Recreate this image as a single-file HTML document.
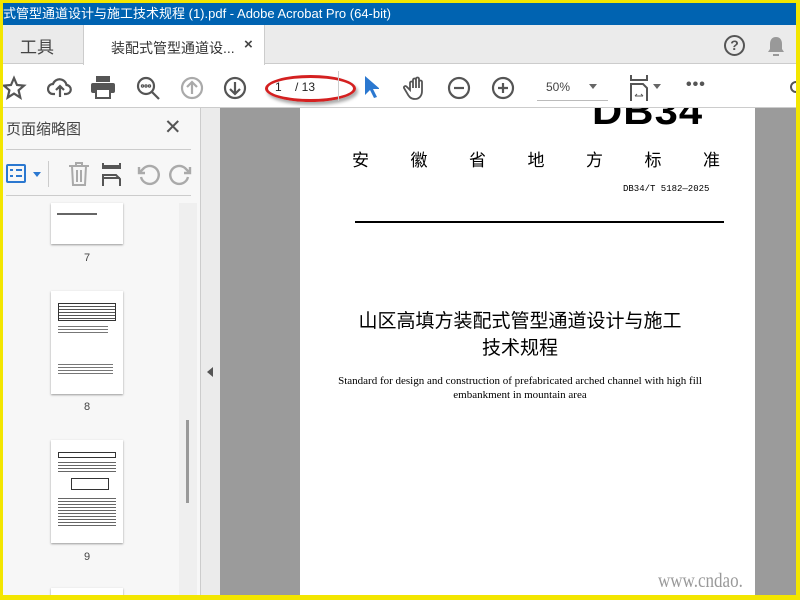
<!DOCTYPE html><html><head><meta charset="utf-8"><style>
*{margin:0;padding:0;box-sizing:border-box}
body{width:800px;height:600px;overflow:hidden;background:#f3e600;position:relative;font-family:"Liberation Sans","Noto Sans CJK SC",sans-serif}
.a{position:absolute}
.ic{position:absolute;top:72px;width:26px;height:26px}
.ic svg{width:26px;height:26px;fill:none;stroke:#555;stroke-width:2.2}
</style></head><body>
<div class="a" style="left:3px;top:3px;width:793px;height:592px;background:#fff;overflow:hidden">
 <div class="a" style="left:0;top:0;width:793px;height:22px;background:#0063b1;color:#fff;font-size:13px;line-height:21px;white-space:nowrap">式管型通道设计与施工技术规程 (1).pdf - Adobe Acrobat Pro (64-bit)</div>
 <div class="a" style="left:14px;top:20px;font-size:14px;color:#999;font-family:'Noto Serif CJK SC',serif;letter-spacing:2px">道标网</div>
 <div class="a" style="left:0;top:22px;width:793px;height:39px;background:#ebebeb;border-bottom:1px solid #ccc"></div>
 <div class="a" style="left:17px;top:30px;font-size:17px;color:#444">工具</div>
 <div class="a" style="left:80px;top:22px;width:182px;height:40px;background:#fff;border-left:1px solid #ccc;border-right:1px solid #ccc"></div>
 <div class="a" style="left:108px;top:35px;font-size:14px;color:#333">装配式管型通道设...</div>
 <div class="a" style="left:241px;top:33px;font-size:15px;color:#444;font-weight:bold">×</div>
 <div class="a" style="left:721px;top:32px;width:21px;height:21px;border:2px solid #555;border-radius:50%;font-size:14px;font-weight:bold;text-align:center;line-height:17px;color:#555">?</div>
 <svg class="a" style="left:763px;top:32px" width="20" height="22"><path d="M10 2c-4 0-6 3-6 7v5l-2 3h16l-2-3V9c0-4-2-7-6-7z M7 19h6v2H7z" fill="#999"/></svg>
 <div class="ic" style="left:-2px"><svg><path d="M13 3l3 7 7 .6-5.4 4.7 1.7 7.3-6.3-4-6.3 4 1.7-7.3L3 10.6l7-.6z"/></svg></div>
 <div class="ic" style="left:44px"><svg><path d="M8 19H6a5 5 0 010-10 7 7 0 0113.5 1A4.5 4.5 0 0119 19h-2M13 22V12M9 15l4-4 4 4"/></svg></div>
 <svg class="a" style="left:87px;top:72px" width="26" height="24"><rect x="6" y="1" width="14" height="6" fill="#555"/><rect x="1" y="8" width="24" height="10" rx="2" fill="#555"/><rect x="6" y="14" width="14" height="9" fill="#fff" stroke="#555" stroke-width="2"/></svg>
 <div class="ic" style="left:132px"><svg><circle cx="11" cy="11" r="8"/><path d="M17 17l7 7"/><circle cx="7.5" cy="11" r=".6"/><circle cx="11" cy="11" r=".6"/><circle cx="14.5" cy="11" r=".6"/></svg></div>
 <div class="ic" style="left:176px"><svg style="stroke:#aaa"><circle cx="13" cy="13" r="10"/><path d="M13 19V7M8 12l5-5 5 5"/></svg></div>
 <div class="ic" style="left:219px"><svg><circle cx="13" cy="13" r="10"/><path d="M13 7v12M8 14l5 5 5-5"/></svg></div>
 <div class="a" style="left:262px;top:72px;width:91px;height:27px;border:3px solid #d42020;border-radius:50%;box-shadow:2px 3px 3px #aaa"></div>
 <div class="a" style="left:272px;top:77px;font-size:12px;color:#222">1&nbsp;&nbsp;&nbsp;&nbsp;/ 13</div>
 <div class="a" style="left:335px;top:68px;width:1px;height:30px;background:#ccc"></div>
 <svg class="a" style="left:360px;top:72px" width="16" height="24"><path d="M2 1v19l5-5 4 8 3-1-4-8h7z" fill="#2b78d0"/></svg>
 <div class="ic" style="left:400px"><svg style="stroke-width:1.8"><path d="M7 15V8a1.5 1.5 0 013 0v5V5a1.5 1.5 0 013 0v8V4a1.5 1.5 0 013 0v9V7a1.5 1.5 0 013 0v9c0 5-3 8-7 8s-6-2-8-6l-3-5a1.5 1.5 0 012.5-1.5z"/></svg></div>
 <div class="ic" style="left:443px"><svg><circle cx="13" cy="13" r="10"/><path d="M8 13h10"/></svg></div>
 <div class="ic" style="left:487px"><svg><circle cx="13" cy="13" r="10"/><path d="M8 13h10M13 8v10"/></svg></div>
 <div class="a" style="left:543px;top:77px;font-size:12px;color:#444">50%</div>
 <div class="a" style="left:586px;top:81px;border:4px solid transparent;border-top:5px solid #666"></div>
 <div class="a" style="left:534px;top:97px;width:71px;height:1px;background:#bbb"></div>
 <svg class="a" style="left:627px;top:72px" width="20" height="26"><path d="M1 0v5h16V0M1 26V9h12l4 4v13" fill="none" stroke="#555" stroke-width="2"/><path d="M5 21h8M5 21l2-2M13 21l-2-2" stroke="#555"/></svg>
 <div class="a" style="left:650px;top:81px;border:4px solid transparent;border-top:5px solid #666"></div>
 <div class="a" style="left:683px;top:73px;font-size:16px;color:#555;font-weight:bold;letter-spacing:1px">•••</div>
 <div class="a" style="left:787px;top:78px;width:12px;height:12px;border:2px solid #555;border-radius:50%"></div>
 <div class="a" style="left:0;top:104px;width:793px;height:1px;background:#ccc"></div>
 <div class="a" style="left:0;top:105px;width:200px;height:490px;background:#f7f7f7"></div>
 <div class="a" style="left:3px;top:115px;font-size:15px;color:#444">页面缩略图</div>
 <div class="a" style="left:161px;top:112px;font-size:21px;color:#555">✕</div>
 <div class="a" style="left:3px;top:146px;width:185px;height:1px;background:#ccc"></div>
 <div class="a" style="left:3px;top:161px;width:20px;height:19px;border:2px solid #2b78d0;border-radius:2px"></div>
 <div class="a" style="left:7px;top:166px;width:12px;height:2px;border-left:3px solid #2b78d0;border-right:6px solid #2b78d0"></div>
 <div class="a" style="left:7px;top:172px;width:12px;height:2px;border-left:3px solid #2b78d0;border-right:6px solid #2b78d0"></div>
 <div class="a" style="left:30px;top:169px;border:4px solid transparent;border-top:5px solid #2b78d0"></div>
 <div class="a" style="left:45px;top:158px;width:1px;height:26px;background:#ccc"></div>
 <svg class="a" style="left:64px;top:158px" width="24" height="26"><path d="M2 5h20M9 5V2h6v3M5 5l1 19h12l1-19M10 9v12M14 9v12" fill="none" stroke="#aaa" stroke-width="2"/></svg>
 <svg class="a" style="left:99px;top:160px" width="20" height="24"><path d="M1 0v5h17V0M1 3h17M1 23V12h13l4 4v7M1 15h17" fill="none" stroke="#555" stroke-width="2"/></svg>
 <svg class="a" style="left:132px;top:160px" width="26" height="24"><path d="M6 14a9 9 0 103-9l-4 4M4 4v6h6" fill="none" stroke="#aaa" stroke-width="2.4"/></svg>
 <svg class="a" style="left:165px;top:160px" width="26" height="24"><path d="M20 14a9 9 0 11-3-9l4 4M22 4v6h-6" fill="none" stroke="#aaa" stroke-width="2.4"/></svg>
 <div class="a" style="left:3px;top:192px;width:185px;height:1px;background:#ccc"></div>
 <div class="a" style="left:176px;top:200px;width:18px;height:395px;background:#efefef"></div>
 <div class="a" style="left:183px;top:417px;width:3px;height:83px;background:#999"></div>
 <div class="a" style="left:48px;top:200px;width:72px;height:41px;background:#fff;box-shadow:0 1px 2px #999"><div style="margin:10px 0 0 6px;width:40px;height:2px;background:#666"></div></div>
 <div class="a" style="left:81px;top:249px;font-size:11px;color:#444">7</div>
 <div class="a" style="left:48px;top:288px;width:72px;height:103px;background:#fff;box-shadow:0 1px 2px #999">
  <div style="margin:12px 0 0 7px;width:58px;height:18px;border:1px solid #333;background:repeating-linear-gradient(#fff 0 2px,#555 2px 3px)"></div>
  <div style="margin:3px 0 0 7px;width:50px;height:10px;background:repeating-linear-gradient(#fff 0 2px,#777 2px 3px)"></div>
  <div style="margin:28px 0 0 7px;width:55px;height:14px;background:repeating-linear-gradient(#fff 0 2px,#777 2px 3px)"></div></div>
 <div class="a" style="left:81px;top:398px;font-size:11px;color:#444">8</div>
 <div class="a" style="left:48px;top:437px;width:72px;height:103px;background:#fff;box-shadow:0 1px 2px #999">
  <div style="margin:12px 0 0 7px;width:58px;height:6px;border:1px solid #333"></div>
  <div style="margin:2px 0 0 7px;width:58px;height:14px;background:repeating-linear-gradient(#fff 0 2px,#666 2px 3px)"></div>
  <div style="margin:4px 0 0 20px;width:38px;height:12px;border:1px solid #333"></div>
  <div style="margin:6px 0 0 7px;width:58px;height:30px;background:repeating-linear-gradient(#fff 0 2px,#666 2px 3px)"></div></div>
 <div class="a" style="left:81px;top:548px;font-size:11px;color:#444">9</div>
 <div class="a" style="left:48px;top:585px;width:72px;height:10px;background:#fff;box-shadow:0 1px 2px #999"></div>
 <div class="a" style="left:197px;top:105px;width:1px;height:490px;background:#ccc"></div>
 <div class="a" style="left:198px;top:105px;width:19px;height:490px;background:#ebebeb"></div>
 <div class="a" style="left:204px;top:364px;border:5px solid transparent;border-right:6px solid #555;border-left:0"></div>
 <div class="a" style="left:217px;top:105px;width:576px;height:490px;background:#9b9b9b"></div>
 <div class="a" style="left:297px;top:105px;width:455px;height:490px;background:#fff;overflow:hidden">
  <div class="a" style="left:292px;top:-17px;font-size:38px;font-weight:bold;color:#000;font-family:'Liberation Sans',sans-serif;letter-spacing:1px;transform:scaleX(1.1);transform-origin:left">DB34</div>
  <div class="a" style="left:52px;top:38px;width:368px;font-size:17px;display:flex;justify-content:space-between;color:#000"><span>安</span><span>徽</span><span>省</span><span>地</span><span>方</span><span>标</span><span>准</span></div>
  <div class="a" style="left:323px;top:76px;font-size:9px;color:#000;font-family:'Liberation Mono',monospace">DB34/T 5182—2025</div>
  <div class="a" style="left:55px;top:113px;width:369px;height:2px;background:#000"></div>
  <div class="a" style="left:0;top:200px;width:440px;text-align:center;font-size:19px;line-height:27px;color:#000">山区高填方装配式管型通道设计与施工<br>技术规程</div>
  <div class="a" style="left:0;top:266px;width:440px;text-align:center;font-size:11px;line-height:14px;color:#000;font-family:'Liberation Serif',serif">Standard for design and construction of prefabricated arched channel with high fill<br>embankment in mountain area</div>
  <div class="a" style="left:358px;top:462px;font-size:20px;color:#999;font-family:'Liberation Serif',serif;transform:scaleX(.85);transform-origin:left">www.cndao.</div>
 </div>
</div>
</body></html>
